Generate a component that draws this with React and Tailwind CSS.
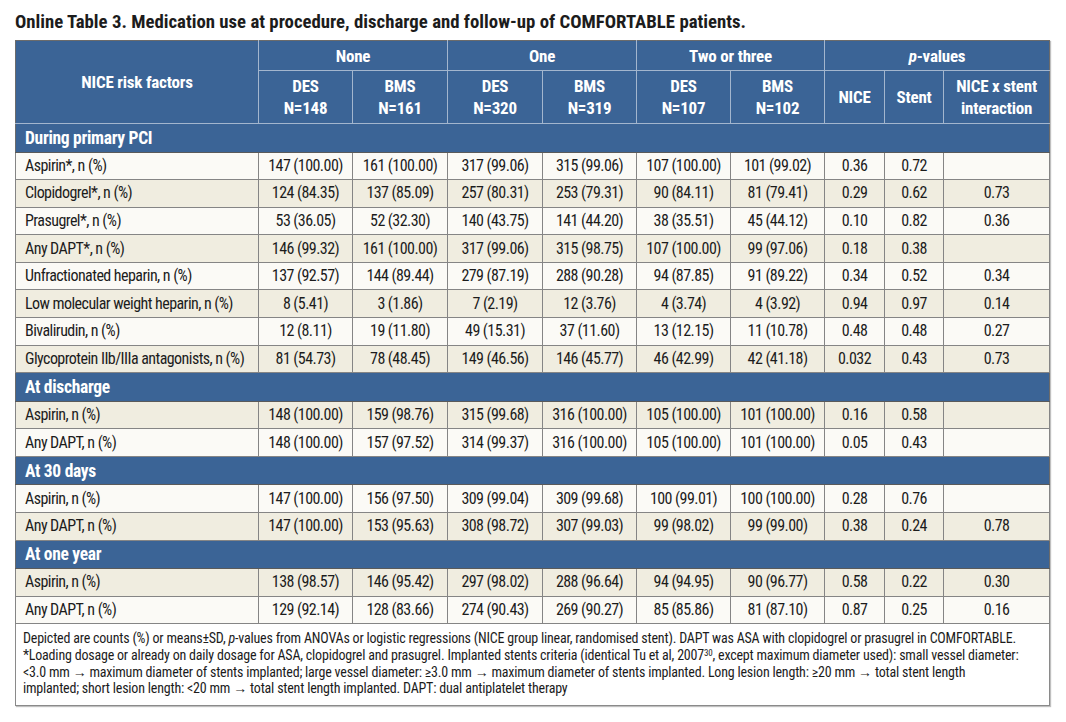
import React from "react";

const sections = [
  {
    title: "During primary PCI",
    rows: [
      ["Aspirin*, n (%)", "147 (100.00)", "161 (100.00)", "317 (99.06)", "315 (99.06)", "107 (100.00)", "101 (99.02)", "0.36", "0.72", "", 0],
      ["Clopidogrel*, n (%)", "124 (84.35)", "137 (85.09)", "257 (80.31)", "253 (79.31)", "90 (84.11)", "81 (79.41)", "0.29", "0.62", "0.73", 1],
      ["Prasugrel*, n (%)", "53 (36.05)", "52 (32.30)", "140 (43.75)", "141 (44.20)", "38 (35.51)", "45 (44.12)", "0.10", "0.82", "0.36", 0],
      ["Any DAPT*, n (%)", "146 (99.32)", "161 (100.00)", "317 (99.06)", "315 (98.75)", "107 (100.00)", "99 (97.06)", "0.18", "0.38", "", 1],
      ["Unfractionated heparin, n (%)", "137 (92.57)", "144 (89.44)", "279 (87.19)", "288 (90.28)", "94 (87.85)", "91 (89.22)", "0.34", "0.52", "0.34", 0],
      ["Low molecular weight heparin, n (%)", "8 (5.41)", "3 (1.86)", "7 (2.19)", "12 (3.76)", "4 (3.74)", "4 (3.92)", "0.94", "0.97", "0.14", 1],
      ["Bivalirudin, n (%)", "12 (8.11)", "19 (11.80)", "49 (15.31)", "37 (11.60)", "13 (12.15)", "11 (10.78)", "0.48", "0.48", "0.27", 0],
      ["Glycoprotein IIb/IIIa antagonists, n (%)", "81 (54.73)", "78 (48.45)", "149 (46.56)", "146 (45.77)", "46 (42.99)", "42 (41.18)", "0.032", "0.43", "0.73", 1],
    ],
  },
  {
    title: "At discharge",
    rows: [
      ["Aspirin, n (%)", "148 (100.00)", "159 (98.76)", "315 (99.68)", "316 (100.00)", "105 (100.00)", "101 (100.00)", "0.16", "0.58", "", 1],
      ["Any DAPT, n (%)", "148 (100.00)", "157 (97.52)", "314 (99.37)", "316 (100.00)", "105 (100.00)", "101 (100.00)", "0.05", "0.43", "", 0],
    ],
  },
  {
    title: "At 30 days",
    rows: [
      ["Aspirin, n (%)", "147 (100.00)", "156 (97.50)", "309 (99.04)", "309 (99.68)", "100 (99.01)", "100 (100.00)", "0.28", "0.76", "", 0],
      ["Any DAPT, n (%)", "147 (100.00)", "153 (95.63)", "308 (98.72)", "307 (99.03)", "99 (98.02)", "99 (99.00)", "0.38", "0.24", "0.78", 1],
    ],
  },
  {
    title: "At one year",
    rows: [
      ["Aspirin, n (%)", "138 (98.57)", "146 (95.42)", "297 (98.02)", "288 (96.64)", "94 (94.95)", "90 (96.77)", "0.58", "0.22", "0.30", 1],
      ["Any DAPT, n (%)", "129 (92.14)", "128 (83.66)", "274 (90.43)", "269 (90.27)", "85 (85.86)", "81 (87.10)", "0.87", "0.25", "0.16", 0],
    ],
  },
];

function HeadCell({ children, className = "", ...rest }) {
  return (
    <th
      {...rest}
      className={`border border-[#a3b6ce] bg-[#3b6496] text-white font-bold text-[17px] leading-[22px] tracking-[-0.2px] text-center align-middle ${className}`}
    >
      {children}
    </th>
  );
}

export default function App() {
  return (
    <div className="w-[1066px] h-[722px] bg-white pl-[15px] pt-[11px] font-['Roboto',sans-serif] font-stretch-condensed text-[#1c1c1c]">
      <h1 className="text-[18.8px] font-bold leading-[22px] h-[29px] whitespace-nowrap">
        Online Table 3. Medication use at procedure, discharge and follow-up of COMFORTABLE patients.
      </h1>
      <table className="table-fixed border-collapse w-[1034px] border border-[#8c8c8c] shadow-[1px_1px_1px_rgba(0,0,0,0.25)]">
        <colgroup>
          <col className="w-[243px]" />
          <col className="w-[94px]" />
          <col className="w-[95px]" />
          <col className="w-[95px]" />
          <col className="w-[94px]" />
          <col className="w-[94px]" />
          <col className="w-[94px]" />
          <col className="w-[60px]" />
          <col className="w-[59px]" />
          <col className="w-[106px]" />
        </colgroup>
        <thead>
          <tr className="h-[30px]">
            <HeadCell rowSpan={2} className="border-l-[#6b6b6b] border-t-[#6b6b6b]">NICE risk factors</HeadCell>
            <HeadCell colSpan={2} className="border-t-[#6b6b6b]">None</HeadCell>
            <HeadCell colSpan={2} className="border-t-[#6b6b6b]">One</HeadCell>
            <HeadCell colSpan={2} className="border-t-[#6b6b6b]">Two or three</HeadCell>
            <HeadCell colSpan={3} className="border-t-[#6b6b6b] border-r-[#6b6b6b]">
              <i>p</i>-values
            </HeadCell>
          </tr>
          <tr className="h-[53px]">
            <HeadCell>DES<br />N=148</HeadCell>
            <HeadCell>BMS<br />N=161</HeadCell>
            <HeadCell>DES<br />N=320</HeadCell>
            <HeadCell>BMS<br />N=319</HeadCell>
            <HeadCell>DES<br />N=107</HeadCell>
            <HeadCell>BMS<br />N=102</HeadCell>
            <HeadCell>NICE</HeadCell>
            <HeadCell>Stent</HeadCell>
            <HeadCell className="border-r-[#6b6b6b]">NICE x stent<br />interaction</HeadCell>
          </tr>
        </thead>
        <tbody>
          {sections.map((s) => (
            <React.Fragment key={s.title}>
              <tr className="h-[28.5px]">
                <td
                  colSpan={10}
                  className="bg-[#3b6496] text-white font-bold text-[17.5px] leading-[20px] tracking-[-0.3px] pl-[9px] border-t border-t-[#a3b6ce] border-b border-b-[#5a5a5a] border-x border-x-[#6b6b6b]"
                >
                  {s.title}
                </td>
              </tr>
              {s.rows.map((r, i) => (
                <tr key={i} className={`h-[27.6px] ${r[10] ? "bg-[#f0ede0]" : "bg-[#fbfaf6]"}`}>
                  {r.slice(0, 10).map((c, j) => (
                    <td
                      key={j}
                      className={`border border-[#858585] text-[16px] leading-[20px] tracking-[-0.55px] whitespace-nowrap ${
                        j === 0 ? "text-left pl-[9px]" : "text-center"
                      }`}
                    >
                      {c}
                    </td>
                  ))}
                </tr>
              ))}
            </React.Fragment>
          ))}
          <tr>
            <td colSpan={10} className="border border-[#8a8a8a] bg-white px-[7px] pt-[6px] pb-[8px] text-[14px] leading-[16.7px] tracking-[-0.2px] whitespace-nowrap">
              Depicted are counts (%) or means±SD, <i>p</i>-values from ANOVAs or logistic regressions (NICE group linear, randomised stent). DAPT was ASA with clopidogrel or prasugrel in COMFORTABLE.
              <br />
              *Loading dosage or already on daily dosage for ASA, clopidogrel and prasugrel. Implanted stents criteria (identical Tu et al, 2007<sup className="text-[9px]">30</sup>, except maximum diameter used): small vessel diameter:
              <br />
              &lt;3.0 mm → maximum diameter of stents implanted; large vessel diameter: ≥3.0 mm → maximum diameter of stents implanted. Long lesion length: ≥20 mm → total stent length
              <br />
              implanted; short lesion length: &lt;20 mm → total stent length implanted. DAPT: dual antiplatelet therapy
            </td>
          </tr>
        </tbody>
      </table>
    </div>
  );
}
